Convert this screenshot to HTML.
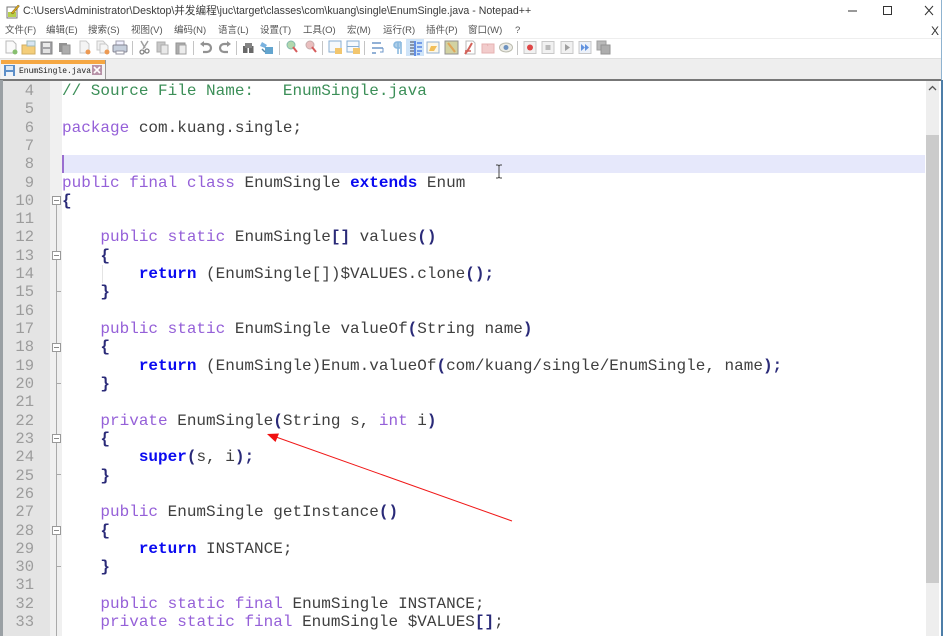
<!DOCTYPE html>
<html><head><meta charset="utf-8">
<style>
html,body{margin:0;padding:0;background:#fff}
#r{position:relative;width:943px;height:636px;overflow:hidden;background:#fff;font-family:"Liberation Sans","Noto Sans CJK SC",sans-serif;filter:blur(.35px)}
#r div,#r svg{position:absolute}
.m{top:24px;font-size:9.5px;line-height:14px;color:#555;white-space:nowrap}
.l{left:62px;margin-top:1px;font:16px/18px "Liberation Mono",monospace;color:#3f3f3f;white-space:pre;height:18px;width:16px;overflow:visible}
.n{left:3px;margin-top:1px;width:31px;text-align:right;font:15.5px/18px "Liberation Mono",monospace;color:#9c9c9c}
i{font-style:normal;color:#9560d8}
b{color:#2a2a78}
u{text-decoration:none;font-weight:bold;color:#0a0af0}
.f{width:9px;height:9px;left:52px;border:1px solid #999;box-sizing:border-box;background:#fff}
.f:after{content:"";position:absolute;left:1px;right:1px;top:3px;height:1px;background:#888}
.sp{top:41px;width:1px;height:14px;background:#c4c4c4}
</style></head><body><div id="r">

<!-- title -->
<svg style="left:6px;top:4px" width="14" height="15" viewBox="0 0 14 15"><rect x="1" y="3" width="10" height="11" fill="#fff" stroke="#777"/><rect x="2" y="8" width="8" height="5" fill="#b6cf4c"/><path d="M5 9L12 1l1.500 1L7 10z" fill="#d9a520" stroke="#6b5a1e" stroke-width=".5"/></svg>
<div style="left:23px;top:3px;font-size:10.6px;line-height:15px;color:#3a3a3a;white-space:nowrap;margin-top:1px">C:\Users\Administrator\Desktop\并发编程\juc\target\classes\com\kuang\single\EnumSingle.java - Notepad++</div>
<svg style="left:840px;top:4px" width="100" height="14" viewBox="0 0 100 14"><path d="M8 7h9" stroke="#333" stroke-width="1"/><rect x="43.500" y="2.500" width="8" height="8" fill="none" stroke="#333"/><path d="M85 2l8 9M93 2l-8 9" stroke="#333" fill="none"/></svg>

<!-- menu -->
<div class="m" style="left:5px">文件(F)</div>
<div class="m" style="left:46px">编辑(E)</div>
<div class="m" style="left:88px">搜索(S)</div>
<div class="m" style="left:131px">视图(V)</div>
<div class="m" style="left:174px">编码(N)</div>
<div class="m" style="left:218px">语言(L)</div>
<div class="m" style="left:260px">设置(T)</div>
<div class="m" style="left:303px">工具(O)</div>
<div class="m" style="left:347px">宏(M)</div>
<div class="m" style="left:383px">运行(R)</div>
<div class="m" style="left:426px">插件(P)</div>
<div class="m" style="left:468px">窗口(W)</div>
<div class="m" style="left:515px">?</div>
<div style="left:931px;top:24px;font-size:12px;line-height:14px;color:#333">X</div>

<!-- toolbar -->
<div style="left:0;top:38px;width:941px;height:1px;background:#eee"></div>
<div style="left:406px;top:39px;width:18px;height:17px;background:#cfe4f8"></div>
<svg style="left:0;top:38px;opacity:.8" width="620" height="20" viewBox="0 0 620 20">
<g stroke-width="1">
<path d="M6 3h7l3 3v9H6z" fill="#fafafa" stroke="#aaa"/><circle cx="15" cy="14" r="2.500" fill="#6ab04c"/>
<path d="M22 7h5l1-2h7v11H22z" fill="#f2c25a" stroke="#c79a3c"/><rect x="27" y="3" width="8" height="5" fill="#cfe0f2" stroke="#8aa"/>
<rect x="41" y="4" width="11" height="12" fill="#8e8e92" stroke="#666"/><rect x="43" y="5" width="7" height="4" fill="#e6e6e6"/><rect x="43" y="11" width="7" height="4" fill="#ddd"/>
<rect x="59" y="5" width="8" height="9" fill="#777"/><rect x="62" y="7" width="8" height="9" fill="#999" stroke="#777"/>
<path d="M80 3h6l3 3v9h-9z" fill="#f2f2f2" stroke="#bbb"/><circle cx="88" cy="14" r="2.500" fill="#e8822a"/>
<path d="M97 3h6l2 2v7h-8z" fill="#eee" stroke="#bbb"/><path d="M100 6h6l2 2v7h-8z" fill="#f4f4f4" stroke="#bbb"/><circle cx="107" cy="14" r="2.500" fill="#e8822a"/>
<path d="M116 3h8v4h-8z" fill="#eef" stroke="#889"/><rect x="113" y="7" width="14" height="7" rx="1" fill="#b8c4d4" stroke="#667"/><rect x="116" y="13" width="8" height="3" fill="#fff" stroke="#778"/>
<path d="M148 3l-5 8M141 3l4 7" stroke="#888" stroke-width="1.500" fill="none"/><circle cx="142" cy="14" r="2" fill="none" stroke="#666" stroke-width="1.300"/><circle cx="147" cy="13" r="2" fill="none" stroke="#666" stroke-width="1.300"/>
<rect x="157" y="4" width="8" height="10" fill="#bbb" stroke="#999"/><rect x="161" y="7" width="7" height="9" fill="#e4e4e4" stroke="#999"/>
<rect x="176" y="5" width="9" height="11" fill="#999" stroke="#777"/><rect x="179" y="7" width="7" height="9" fill="#e8e8e8" stroke="#888"/>
<path d="M202 6h5a3.500 3.500 0 0 1 0 8h-4" fill="none" stroke="#777" stroke-width="2.200"/><path d="M200 6l4-3v6z" fill="#777"/>
<path d="M229 6h-5a3.500 3.500 0 0 0 0 8h4" fill="none" stroke="#777" stroke-width="2.200"/><path d="M231 6l-4-3v6z" fill="#777"/>
<rect x="243" y="8" width="4.500" height="7" fill="#444"/><rect x="249" y="8" width="4.500" height="7" fill="#444"/><rect x="245" y="5" width="7" height="5" fill="#666"/>
<path d="M262 4l5 3-2 3-5-2z" fill="#5aa0d8"/><rect x="265" y="9" width="8" height="7" fill="#3d8fc4"/><path d="M262 11l3 3" stroke="#2a6a90" stroke-width="1.500"/>
<circle cx="291" cy="7" r="4" fill="#9fcf9a" stroke="#6a9"/><path d="M293 9l4 5" stroke="#c33" stroke-width="2"/>
<circle cx="310" cy="7" r="4" fill="#e6b0b0" stroke="#b99"/><path d="M312 9l4 5" stroke="#c33" stroke-width="2"/>
<rect x="329" y="3" width="12" height="11" fill="#f5f8fc" stroke="#6b9ac8"/><rect x="335" y="10" width="7" height="6" fill="#f0b84a"/>
<rect x="347" y="3" width="12" height="11" fill="#f5f8fc" stroke="#6b9ac8"/><rect x="347" y="8" width="12" height="1" fill="#6b9ac8"/><rect x="353" y="10" width="7" height="6" fill="#f0b84a"/>
<path d="M372 5h9M372 10h11M372 15h4" stroke="#4a7ebc" stroke-width="1.500" fill="none"/><path d="M383 10v4h-3" stroke="#4a7ebc" fill="none"/>
<path d="M398 4v12M401 4v12M401 4h-4a3 3 0 0 0 0 6h3" stroke="#6ea8d8" stroke-width="1.600" fill="#9cc4e4"/>
<path d="M410 4h4M410 7h4M410 10h4M410 13h4M410 16h4" stroke="#223" stroke-width="1"/><path d="M415 3v15" stroke="#1a55d8" stroke-width="1.500"/><path d="M417 5h5M417 9h5M417 13h5M417 16h3" stroke="#1a55d8" stroke-width="1.200"/>
<rect x="427" y="4" width="12" height="11" fill="#fdf6e0" stroke="#7aa0c8"/><path d="M431 8h6l-3 5h-5z" fill="#f0b030"/>
<rect x="445" y="3" width="13" height="13" fill="#c8c88c" stroke="#777"/><path d="M448 5l4 5 3 4" stroke="#d89030" stroke-width="2.200" fill="none"/>
<path d="M466 3h7l2 2v11h-9z" fill="#fff" stroke="#aaa"/><path d="M472 5l-4 7-3 4" stroke="#c83a30" stroke-width="2" fill="none"/><path d="M465 13h6" stroke="#c83a30" stroke-width="1.500"/>
<rect x="482" y="6" width="12" height="9" fill="#f0c0c0" stroke="#e0a0a0"/><path d="M482 6h5l1 2" stroke="#e0a0a0" fill="none"/>
<ellipse cx="506" cy="9.500" rx="6.500" ry="4.500" fill="#e8e8e0" stroke="#aa9"/><circle cx="506" cy="9.500" r="2.500" fill="#4a78b0"/>
<rect x="524" y="3.500" width="12" height="12" fill="#eee" stroke="#bbb"/><circle cx="530" cy="9.500" r="3" fill="#d81818"/>
<rect x="542" y="3.500" width="12" height="12" fill="#eee" stroke="#bbb"/><rect x="545.500" y="7" width="5" height="5" fill="#aaa"/>
<rect x="561" y="3.500" width="12" height="12" fill="#eee" stroke="#bbb"/><path d="M565 6l5 3.500-5 3.500z" fill="#888"/>
<rect x="579" y="3.500" width="12" height="12" fill="#e8eef8" stroke="#bbb"/><path d="M581 6l4 3.500-4 3.500zM585 6l4 3.500-4 3.500z" fill="#3a78d8"/>
<rect x="597" y="3" width="9" height="9" fill="#aaa" stroke="#888"/><rect x="601" y="7" width="9" height="9" fill="#999" stroke="#777"/>
</g></svg>
<div class="sp" style="left:132px"></div><div class="sp" style="left:193px"></div><div class="sp" style="left:236px"></div><div class="sp" style="left:279px"></div><div class="sp" style="left:322px"></div><div class="sp" style="left:364px"></div><div class="sp" style="left:517px"></div>

<!-- tab bar -->
<div style="left:0;top:58px;width:941px;height:21px;background:#eeeeee;border-top:1px solid #e0e0e0;box-sizing:border-box"></div>
<div style="left:1px;top:60px;width:105px;height:20px;background:#f4f4f4;border-right:1px solid #999;box-sizing:border-box"></div>
<div style="left:1px;top:60px;width:104px;height:4px;background:#f5a742"></div>
<svg style="left:4px;top:65px" width="11" height="11" viewBox="0 0 11 11"><rect width="11" height="11" fill="#5d8fc8"/><rect x="2" y="1" width="7" height="4" fill="#dbe8f6"/><rect x="2" y="7" width="7" height="4" fill="#eef3f9"/></svg>
<div style="left:19px;top:65px;font:8px/13px 'Liberation Mono',monospace;color:#222;white-space:nowrap">EnumSingle.java</div>
<svg style="left:92px;top:65px" width="10" height="10" viewBox="0 0 10 10"><rect width="10" height="10" fill="#b893a8"/><path d="M2 2l6 6M8 2l-6 6" stroke="#fff" stroke-width="1.600"/></svg>

<!-- editor frame -->
<div style="left:0;top:79px;width:941px;height:2px;background:#777"></div>
<div style="left:0;top:80px;width:3px;height:556px;background:#9aa0a4"></div>
<div style="left:3px;top:81px;width:47px;height:555px;background:#e4e4e4"></div>
<div style="left:50px;top:81px;width:12px;height:555px;background:#f0f0f0"></div>
<div style="left:62px;top:155px;width:863px;height:18px;background:#e6e8fb"></div>
<div style="left:62px;top:155px;width:1.500px;height:18px;background:#9a6fd0"></div>
<div style="left:56px;top:200px;width:1px;height:436px;background:#aaa"></div>
<div style="left:102px;top:265px;width:1px;height:18px;background:#e4e4e4"></div>

<!-- scrollbar -->
<div style="left:926px;top:81px;width:13px;height:555px;background:#eeeeee"></div>
<div style="left:926px;top:135px;width:13px;height:448px;background:#cbcbcb"></div>
<svg style="left:928px;top:85px" width="9" height="7" viewBox="0 0 9 7"><path d="M1 5l3.500-3.500L8 5" fill="none" stroke="#555" stroke-width="1.300"/></svg>
<div style="left:941px;top:0;width:1px;height:80px;background:#8fb3d0"></div>
<div style="left:941px;top:80px;width:2px;height:556px;background:#4d7ea8"></div>

<!-- line numbers -->
<div class="n" style="top:81px">4</div>
<div class="n" style="top:99px">5</div>
<div class="n" style="top:118px">6</div>
<div class="n" style="top:136px">7</div>
<div class="n" style="top:154px">8</div>
<div class="n" style="top:173px">9</div>
<div class="n" style="top:191px">10</div>
<div class="n" style="top:209px">11</div>
<div class="n" style="top:227px">12</div>
<div class="n" style="top:246px">13</div>
<div class="n" style="top:264px">14</div>
<div class="n" style="top:282px">15</div>
<div class="n" style="top:301px">16</div>
<div class="n" style="top:319px">17</div>
<div class="n" style="top:337px">18</div>
<div class="n" style="top:356px">19</div>
<div class="n" style="top:374px">20</div>
<div class="n" style="top:392px">21</div>
<div class="n" style="top:411px">22</div>
<div class="n" style="top:429px">23</div>
<div class="n" style="top:447px">24</div>
<div class="n" style="top:466px">25</div>
<div class="n" style="top:484px">26</div>
<div class="n" style="top:502px">27</div>
<div class="n" style="top:521px">28</div>
<div class="n" style="top:539px">29</div>
<div class="n" style="top:557px">30</div>
<div class="n" style="top:575px">31</div>
<div class="n" style="top:594px">32</div>
<div class="n" style="top:612px">33</div>

<!-- fold marks -->
<div class="f" style="top:196px"></div>
<div class="f" style="top:251px"></div>
<div class="f" style="top:343px"></div>
<div class="f" style="top:434px"></div>
<div class="f" style="top:526px"></div>
<div style="left:56px;top:291px;width:5px;height:1px;background:#aaa"></div>
<div style="left:56px;top:383px;width:5px;height:1px;background:#aaa"></div>
<div style="left:56px;top:474px;width:5px;height:1px;background:#aaa"></div>
<div style="left:56px;top:566px;width:5px;height:1px;background:#aaa"></div>

<!-- code -->
<div class="l" style="top:81px;color:#3c8f58">// Source File Name:   EnumSingle.java</div>
<div class="l" style="top:118px"><i>package</i> com.kuang.single;</div>
<div class="l" style="top:173px"><i>public</i> <i>final</i> <i>class</i> EnumSingle <u>extends</u> Enum</div>
<div class="l" style="top:191px"><b>{</b></div>
<div class="l" style="top:227px">    <i>public</i> <i>static</i> EnumSingle<b>[]</b> values<b>()</b></div>
<div class="l" style="top:246px">    <b>{</b></div>
<div class="l" style="top:264px">        <u>return</u> (EnumSingle[])$VALUES.clone<b>();</b></div>
<div class="l" style="top:282px">    <b>}</b></div>
<div class="l" style="top:319px">    <i>public</i> <i>static</i> EnumSingle valueOf<b>(</b>String name<b>)</b></div>
<div class="l" style="top:337px">    <b>{</b></div>
<div class="l" style="top:356px">        <u>return</u> (EnumSingle)Enum.valueOf<b>(</b>com/kuang/single/EnumSingle, name<b>);</b></div>
<div class="l" style="top:374px">    <b>}</b></div>
<div class="l" style="top:411px">    <i>private</i> EnumSingle<b>(</b>String s, <i>int</i> i<b>)</b></div>
<div class="l" style="top:429px">    <b>{</b></div>
<div class="l" style="top:447px">        <u>super</u><b>(</b>s, i<b>);</b></div>
<div class="l" style="top:466px">    <b>}</b></div>
<div class="l" style="top:502px">    <i>public</i> EnumSingle getInstance<b>()</b></div>
<div class="l" style="top:521px">    <b>{</b></div>
<div class="l" style="top:539px">        <u>return</u> INSTANCE;</div>
<div class="l" style="top:557px">    <b>}</b></div>
<div class="l" style="top:594px">    <i>public</i> <i>static</i> <i>final</i> EnumSingle INSTANCE;</div>
<div class="l" style="top:612px">    <i>private</i> <i>static</i> <i>final</i> EnumSingle $VALUES<b>[]</b>;</div>

<!-- I-beam cursor -->
<svg style="left:494px;top:164px" width="10" height="15" viewBox="0 0 10 15"><path d="M2 1h2l1 1 1-1h2M5 2v11M2 14h2l1-1 1 1h2" fill="none" stroke="#444" stroke-width="1"/></svg>

<!-- arrow -->
<svg style="left:0;top:0" width="943" height="636" viewBox="0 0 943 636"><path d="M512 521L276 437" stroke="#f01818" stroke-width="1" fill="none"/><path d="M267 434L279 433.500L275.500 442z" fill="#f01010"/></svg>

</div></body></html>
